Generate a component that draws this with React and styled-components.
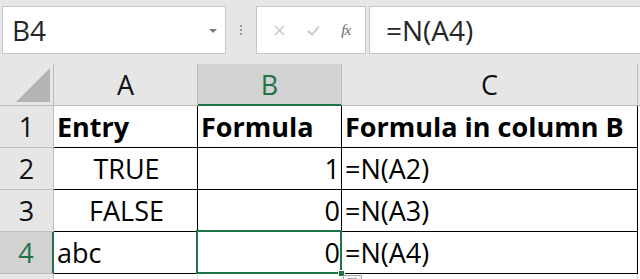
import React from "react";
import styled, { createGlobalStyle, css } from "styled-components";

const GREEN = "#217346";
const HEAD_BG = "#e6e6e6";
const HEAD_SEL = "#d2d2d2";
const HEAD_LINE = "#bcbcbc";
const FONT = `"Open Sans", "Noto Sans", sans-serif`;

const Global = createGlobalStyle`
  html, body { margin: 0; padding: 0; background: #ffffff; overflow: hidden; }
  body { font-family: ${FONT}; }
`;

const Page = styled.div`
  width: 640px;
  height: 279px;
  overflow: hidden;
  background: #ffffff;
`;

const Toolbar = styled.div`
  height: 64px;
  background: ${HEAD_BG};
  display: flex;
  align-items: flex-start;
  padding-top: 6px;
  box-sizing: border-box;
`;

const Box = styled.div`
  height: 48px;
  box-sizing: border-box;
  background: #ffffff;
  border: 1px solid #c6c6c6;
  display: flex;
  align-items: center;
`;

const NameBox = styled(Box)`
  width: 224px;
  margin-left: 2px;
  padding: 0 8px 0 9px;
  justify-content: space-between;
  font-size: 28px;
  color: #262626;
`;

const Caret = styled.span`
  width: 0;
  height: 0;
  border-left: 4px solid transparent;
  border-right: 4px solid transparent;
  border-top: 4px solid #7a7a7a;
  margin-top: 2px;
`;

const Grip = styled.div`
  width: 30px;
  height: 48px;
  display: flex;
  flex-direction: column;
  align-items: center;
  justify-content: center;
  gap: 2px;
  span {
    width: 2px;
    height: 2px;
    background: #9a9a9a;
  }
`;

const Buttons = styled(Box)`
  width: 110px;
  justify-content: space-around;
  padding: 0 4px 0 6px;
`;

const Fx = styled.span`
  font-family: "Liberation Serif", "DejaVu Serif", serif;
  font-style: italic;
  font-size: 15px;
  color: #666666;
  letter-spacing: -1px;
`;

const FormulaBox = styled(Box)`
  flex: 1;
  margin-left: 3px;
  border-right: none;
  padding-left: 16px;
  font-size: 28px;
  color: #262626;
`;

const Sheet = styled.div`
  display: grid;
  grid-template-columns: 54px 144px 144px 296px 1fr;
  grid-auto-rows: 42px;
`;

const Corner = styled.div`
  background: ${HEAD_BG};
  border-right: 1px solid ${HEAD_LINE};
  border-bottom: 1px solid ${HEAD_LINE};
  box-sizing: border-box;
  display: flex;
  align-items: flex-end;
  justify-content: flex-end;
  padding: 0 3px 3px 0;
`;

const ColHead = styled.div`
  background: ${(p) => (p.$sel ? HEAD_SEL : HEAD_BG)};
  color: ${(p) => (p.$sel ? GREEN : "#111111")};
  border-right: 1px solid ${HEAD_LINE};
  border-bottom: ${(p) => (p.$sel ? `2px solid ${GREEN}` : `1px solid ${HEAD_LINE}`)};
  box-sizing: border-box;
  display: flex;
  align-items: center;
  justify-content: center;
  font-size: 27px;
  line-height: 1;
  padding-top: ${(p) => (p.$sel ? "1px" : "0")};
`;

const HeadFill = styled.div`
  background: ${HEAD_BG};
  border-bottom: 1px solid ${HEAD_LINE};
  box-sizing: border-box;
`;

const RowHead = styled.div`
  background: ${(p) => (p.$sel ? HEAD_SEL : HEAD_BG)};
  color: ${(p) => (p.$sel ? GREEN : "#111111")};
  border-right: ${(p) => (p.$sel ? `2px solid ${GREEN}` : `1px solid ${HEAD_LINE}`)};
  border-bottom: ${(p) => (p.$last ? "none" : `1px solid ${HEAD_LINE}`)};
  box-sizing: border-box;
  display: flex;
  align-items: flex-end;
  justify-content: center;
  padding-bottom: 7px;
  font-size: 27px;
  line-height: 1;
`;

const Cell = styled.div`
  position: relative;
  box-sizing: border-box;
  background: #ffffff;
  border-right: 1px solid ${(p) => (p.$empty ? "#d4d4d4" : "#000000")};
  border-bottom: ${(p) => (p.$empty ? "none" : "1px solid #000000")};
  display: flex;
  align-items: flex-end;
  justify-content: ${(p) =>
    p.$align === "right" ? "flex-end" : p.$align === "center" ? "center" : "flex-start"};
  padding: 0 1px 7px 3px;
  font-size: 27px;
  line-height: 1;
  color: #000000;
  font-weight: ${(p) => (p.$bold ? 700 : 400)};
  white-space: nowrap;
  ${(p) =>
    p.$selected &&
    css`
      &::after {
        content: "";
        position: absolute;
        top: -2px;
        left: -2px;
        right: -1px;
        bottom: -1px;
        border: 2px solid ${GREEN};
        pointer-events: none;
      }
    `}
`;

const Handle = styled.span`
  position: absolute;
  right: -4px;
  bottom: -4px;
  width: 5px;
  height: 5px;
  background: ${GREEN};
  border: 1px solid #ffffff;
  z-index: 2;
`;

const PasteTag = styled.span`
  position: absolute;
  left: 145px;
  top: 43px;
  width: 19px;
  height: 14px;
  border: 1px solid #a6a6a6;
  background: #f4f4f4;
  box-sizing: border-box;
  z-index: 2;
  &::after {
    content: "";
    position: absolute;
    left: 4px;
    top: 2px;
    width: 9px;
    height: 1px;
    background: #a6a6a6;
  }
`;

const Fill = styled.div`
  background: #ffffff;
`;

const rows = [
  { n: 1, a: "Entry", aBold: true, b: "Formula", bBold: true, bAlign: "left", c: "Formula in column B", cBold: true },
  { n: 2, a: "TRUE", aAlign: "center", b: "1", c: "=N(A2)" },
  { n: 3, a: "FALSE", aAlign: "center", b: "0", c: "=N(A3)" },
  { n: 4, a: "abc", b: "0", c: "=N(A4)", sel: true },
];

export default function App() {
  return (
    <Page>
      <Global />
      <Toolbar>
        <NameBox>
          <span>B4</span>
          <Caret />
        </NameBox>
        <Grip>
          <span />
          <span />
          <span />
        </Grip>
        <Buttons>
          <svg width="11" height="11" viewBox="0 0 11 11">
            <path d="M1 1 L10 10 M10 1 L1 10" stroke="#c4c4c4" strokeWidth="1.4" fill="none" />
          </svg>
          <svg width="13" height="11" viewBox="0 0 13 11">
            <path d="M1 6 L5 9.5 L12 1.5" stroke="#c4c4c4" strokeWidth="1.8" fill="none" />
          </svg>
          <Fx>fx</Fx>
        </Buttons>
        <FormulaBox>=N(A4)</FormulaBox>
      </Toolbar>
      <Sheet>
        <Corner>
          <svg width="34" height="34" viewBox="0 0 34 34">
            <polygon points="0,34 34,34 34,0" fill="#b4b4b4" />
          </svg>
        </Corner>
        <ColHead>A</ColHead>
        <ColHead $sel>B</ColHead>
        <ColHead>C</ColHead>
        <HeadFill />
        {rows.map((r) => (
          <React.Fragment key={r.n}>
            <RowHead $sel={r.sel}>{r.n}</RowHead>
            <Cell $bold={r.aBold} $align={r.aAlign}>{r.a}</Cell>
            <Cell $bold={r.bBold} $align={r.bAlign || "right"} $selected={r.sel}>
              {r.b}
              {r.sel && (
                <>
                  <Handle />
                  <PasteTag />
                </>
              )}
            </Cell>
            <Cell $bold={r.cBold}>{r.c}</Cell>
            <Fill />
          </React.Fragment>
        ))}
        <RowHead $last />
        <Cell $empty />
        <Cell $empty />
        <Cell $empty />
        <Fill />
      </Sheet>
    </Page>
  );
}
